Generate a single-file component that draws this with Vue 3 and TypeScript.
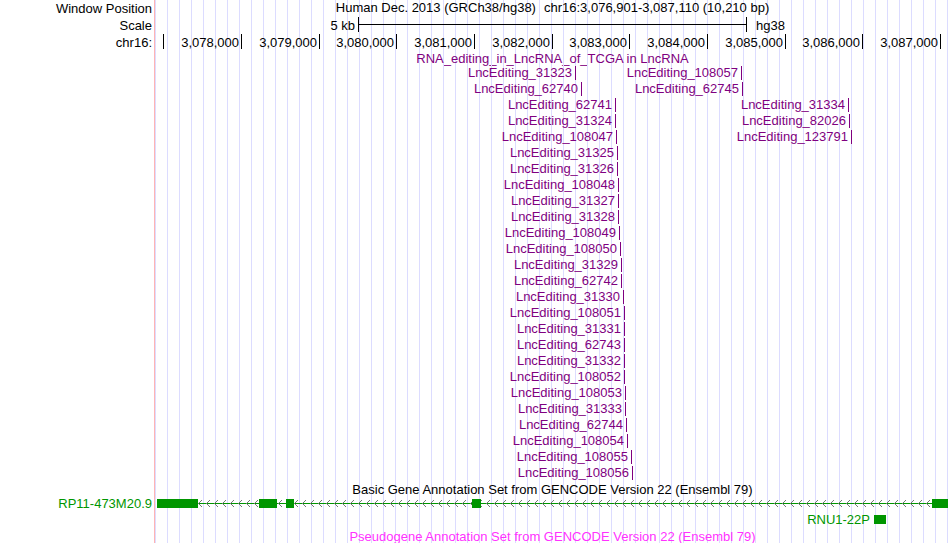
<script setup lang="ts">
interface Item { name: string; x: number }
interface Exon { x: number; w: number }

// Horizontal units: the track area is 795 units wide.
const SPAN = 795
const pct = (v: number): string => `${(v / SPAN) * 100}%`
const at = (x: number) => ({ left: pct(x) })
const before = (x: number) => ({ right: pct(SPAN - x) })
const box = (x: number, w: number) => ({ left: pct(x), width: pct(w) })

const axis: Item[] = [
  { name: '', x: 8 },
  { name: '3,078,000', x: 86 },
  { name: '3,079,000', x: 164 },
  { name: '3,080,000', x: 241 },
  { name: '3,081,000', x: 319 },
  { name: '3,082,000', x: 397 },
  { name: '3,083,000', x: 474 },
  { name: '3,084,000', x: 552 },
  { name: '3,085,000', x: 630 },
  { name: '3,086,000', x: 707 },
  { name: '3,087,000', x: 785 },
]

const item = (id: number, x: number): Item => ({ name: `LncEditing_${id}`, x })
const rows: Item[][] = [
  [item(31323, 420), item(108057, 586)],
  [item(62740, 426), item(62745, 587)],
  [item(62741, 460), item(31334, 693)],
  [item(31324, 460), item(82026, 694)],
  [item(108047, 461), item(123791, 696)],
  [item(31325, 462)],
  [item(31326, 462)],
  [item(108048, 463)],
  [item(31327, 463)],
  [item(31328, 463)],
  [item(108049, 464)],
  [item(108050, 465)],
  [item(31329, 466)],
  [item(62742, 466)],
  [item(31330, 468)],
  [item(108051, 469)],
  [item(31331, 469)],
  [item(62743, 469)],
  [item(31332, 469)],
  [item(108052, 469)],
  [item(108053, 470)],
  [item(31333, 470)],
  [item(62744, 471)],
  [item(108054, 472)],
  [item(108055, 476)],
  [item(108056, 477)],
]

const exons: Exon[] = [
  { x: 2, w: 41 },
  { x: 104, w: 18 },
  { x: 131, w: 8 },
  { x: 317, w: 9 },
  { x: 777, w: 16 },
]
</script>

<template>
  <main class="browser">
    <div class="row head">
      <div class="label">Window Position</div>
      <div class="track title">
        <span>Human Dec. 2013 (GRCh38/hg38)</span>
        <span class="position">chr16:3,076,901-3,087,110 (10,210 bp)</span>
      </div>
    </div>
    <div class="row head">
      <div class="label">Scale</div>
      <div class="track">
        <span class="text item" :style="before(203)">5 kb</span>
        <div class="scale" :style="box(203, 389)"></div>
        <span class="text after" :style="at(597)">hg38</span>
      </div>
    </div>
    <div class="row head">
      <div class="label">chr16:</div>
      <div class="track">
        <template v-for="t in axis" :key="t.x">
          <span class="text" :style="before(t.x)">{{ t.name }}</span>
          <i class="tick" :style="at(t.x)"></i>
        </template>
      </div>
    </div>

    <section class="purple">
      <div class="row first">
        <div class="label"></div>
        <h2 class="track title">RNA_editing_in_LncRNA_of_TCGA in LncRNA</h2>
      </div>
      <div v-for="(r, i) in rows" :key="i" class="row">
        <div class="label"></div>
        <div class="track">
          <template v-for="t in r" :key="t.name">
            <span class="text item" :style="before(t.x)">{{ t.name }}</span>
            <i class="tick mark" :style="at(t.x)"></i>
          </template>
        </div>
      </div>
    </section>

    <div class="row caption">
      <div class="label"></div>
      <h2 class="track title">Basic Gene Annotation Set from GENCODE Version 22 (Ensembl 79)</h2>
    </div>
    <div class="row green">
      <div class="label">RP11-473M20.9</div>
      <div class="track">
        <div class="intron" :style="box(43, 734)">
          <svg class="arrows" aria-hidden="true">
            <defs>
              <pattern id="chevron" width="8" height="7" patternUnits="userSpaceOnUse">
                <path d="M3 0h1v1h-1zM2 1h1v1h-1zM1 2h1v1h-1zM0 3h1v1h-1zM1 4h1v1h-1zM2 5h1v1h-1zM3 6h1v1h-1z" fill="#777" shape-rendering="crispEdges" />
              </pattern>
            </defs>
            <rect width="100%" height="7" fill="url(#chevron)" />
          </svg>
        </div>
        <i v-for="e in exons" :key="e.x" class="exon" :style="box(e.x, e.w)"></i>
      </div>
    </div>
    <div class="row green">
      <div class="label"></div>
      <div class="track">
        <span class="text item" :style="before(718)">RNU1-22P</span>
        <i class="exon" :style="box(719, 12)"></i>
      </div>
    </div>
    <div class="row caption pink">
      <div class="label"></div>
      <h2 class="track title">Pseudogene Annotation Set from GENCODE Version 22 (Ensembl 79)</h2>
    </div>
  </main>
</template>

<style>
body {
  margin: 0;
  background: #fff;
}
</style>

<style scoped>
.browser {
  overflow: hidden;
  font: 13px/16px "Liberation Sans", Arial, sans-serif;
  color: #000;
}
.row {
  display: grid;
  grid-template-columns: 155px 1fr;
  height: 16px;
}
.head {
  height: 17px;
  line-height: 18px;
}
.head .title {
  line-height: 16px;
}
.caption {
  height: 15px;
  line-height: 18px;
}
.first {
  height: 14px;
}
.label {
  box-sizing: border-box;
  padding-right: 2px;
  border-right: 1px solid #ffb4b4;
  text-align: right;
}
.track {
  position: relative;
  background: linear-gradient(to right, #dcdcff 1px, transparent 1px) 12px 0 / 12px 100%;
  white-space: nowrap;
}
.title {
  margin: 0;
  font-size: 13px;
  font-weight: normal;
  text-align: center;
}
.position {
  margin-left: 8px;
}
.text {
  position: absolute;
  top: 0;
  padding-right: 2px;
}
.item {
  padding-right: 3px;
}
.after {
  padding: 0 0 0 4px;
}
.tick {
  position: absolute;
  top: 0;
  width: 1px;
  height: 15px;
  background: currentColor;
}
.mark {
  top: 1px;
  height: 14px;
}
.scale {
  position: absolute;
  top: 0;
  box-sizing: border-box;
  height: 15px;
  border: solid #000;
  border-width: 0 1px;
  background: linear-gradient(#000, #000) 0 7px / 100% 1px no-repeat;
}
.intron {
  position: absolute;
  top: 4px;
  height: 7px;
  background: linear-gradient(#009600, #009600) 0 3px / 100% 1px no-repeat;
}
.arrows {
  display: block;
  width: 100%;
  height: 7px;
}
.exon {
  position: absolute;
  top: 3px;
  height: 9px;
  background: #009600;
}
.purple {
  color: #800080;
}
.green {
  color: #009600;
}
.pink {
  color: #ff32ff;
}
</style>
